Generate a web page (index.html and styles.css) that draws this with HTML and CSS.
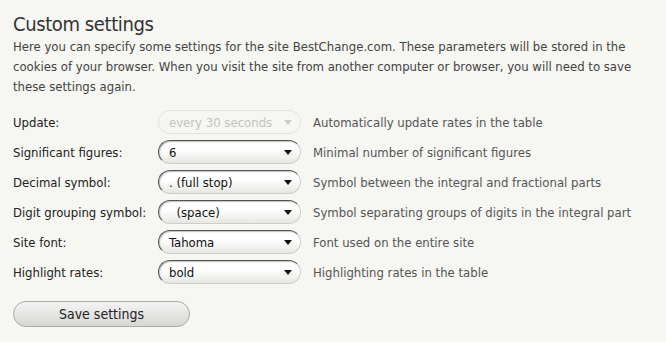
FILE: index.html
```html
<!DOCTYPE html>
<html lang="en">
<head>
    <meta charset="UTF-8"/>
    <title>Custom settings</title>
    <link rel="stylesheet" href="styles.css">
</head>
<body>
<div class="container">
    <h2>Custom settings</h2>
    <p class="intro">Here you can specify some settings for the site BestChange.com. These parameters will be stored in the cookies of your browser. When you visit the site from another computer or browser, you will need to save these settings again.</p>

    <div class="settings">
        <div class="label">Update:</div>
        <div class="select disabled"><span>every 30 seconds</span><svg viewBox="0 0 8 5"><path d="M0 0h8L4 5z"/></svg></div>
        <div class="desc">Automatically update rates in the table</div>

        <div class="label">Significant figures:</div>
        <div class="select"><span>6</span><svg viewBox="0 0 8 5"><path d="M0 0h8L4 5z"/></svg></div>
        <div class="desc">Minimal number of significant figures</div>

        <div class="label">Decimal symbol:</div>
        <div class="select"><span>. (full stop)</span><svg viewBox="0 0 8 5"><path d="M0 0h8L4 5z"/></svg></div>
        <div class="desc">Symbol between the integral and fractional parts</div>

        <div class="label">Digit grouping symbol:</div>
        <div class="select"><span>&nbsp;&nbsp;(space)</span><svg viewBox="0 0 8 5"><path d="M0 0h8L4 5z"/></svg></div>
        <div class="desc">Symbol separating groups of digits in the integral part</div>

        <div class="label">Site font:</div>
        <div class="select"><span>Tahoma</span><svg viewBox="0 0 8 5"><path d="M0 0h8L4 5z"/></svg></div>
        <div class="desc">Font used on the entire site</div>

        <div class="label">Highlight rates:</div>
        <div class="select"><span>bold</span><svg viewBox="0 0 8 5"><path d="M0 0h8L4 5z"/></svg></div>
        <div class="desc">Highlighting rates in the table</div>
    </div>

    <button type="button">Save settings</button>
</div>
</body>
</html>
```

FILE: styles.css
```css
body {
    font-family: 'DejaVu Sans Condensed', 'DejaVu Sans', sans-serif;
    font-size: 13px;
    background-color: #f6f6f2;
    margin: 0;
    color: #333;
}

.container {
    padding: 12px 13px 0 13px;
}

h2 {
    font-size: 20px;
    font-weight: normal;
    letter-spacing: -0.4px;
    line-height: 25px;
    margin: 0;
    color: #333;
}

.intro {
    margin: 0;
    line-height: 20px;
    color: #444;
}

.settings {
    display: grid;
    grid-template-columns: 133px 143px auto;
    column-gap: 12px;
    row-gap: 6px;
    align-items: center;
    margin-top: 13px;
}

.label {
    color: #222;
    white-space: nowrap;
}

.desc {
    color: #555;
}

.select {
    display: flex;
    align-items: center;
    justify-content: space-between;
    height: 24px;
    box-sizing: border-box;
    padding: 0 8px 0 10px;
    border-radius: 12px;
    border: 1px solid #cfcfca;
    border-top-color: #555;
    border-left-color: #555;
    background: linear-gradient(#ffffff 40%, #e6e6e3);
    box-shadow: inset 1px 1px 1px rgba(0, 0, 0, 0.25);
    color: #111;
}

.select svg {
    width: 8px;
    height: 5px;
    fill: #111;
}

.select.disabled {
    border-color: #e2e2de;
    box-shadow: none;
    background: #f6f6f2;
    color: #c4c4c0;
}

.select.disabled svg {
    fill: #ccc;
}

button {
    display: block;
    margin-top: 17px;
    width: 177px;
    height: 26px;
    border: 1px solid #aaa;
    border-radius: 13px;
    background: linear-gradient(#f4f4f4, #d6d6d4);
    font-family: inherit;
    font-size: 14px;
    color: #222;
    cursor: pointer;
}
```
